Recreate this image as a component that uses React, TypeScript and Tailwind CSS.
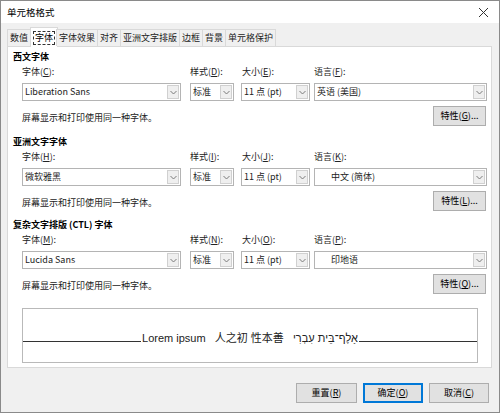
import React from 'react';

const FONT = '"Noto Sans CJK SC", "Noto Sans", sans-serif';

function U({ k }: { k: string }) {
  return <span className="underline underline-offset-1">{k}</span>;
}

function Label({ text, k, className }: { text: string; k: string; className: string }) {
  return (
    <div className={`${className} leading-[14px]`}>
      {text}(<U k={k} />):
    </div>
  );
}

function Chevron() {
  return (
    <svg width="7" height="5" viewBox="0 0 7 5" fill="none">
      <polyline points="0.5,1 3.5,4 6.5,1" stroke="#7a7a7a" strokeWidth="1" />
    </svg>
  );
}

function Combo({ className, text, indent }: { className: string; text: string; indent?: boolean }) {
  return (
    <div className={`${className} h-[18px] flex items-stretch bg-white border border-[#b4b4b4]`}>
      <div className={`flex-1 flex items-center overflow-hidden whitespace-nowrap ${indent ? 'pl-[16px]' : 'pl-[2px]'}`}>
        {text}
      </div>
      <div className="w-[12px] m-[1px] flex items-center justify-center bg-[#efefef] border border-[#d0d0d0]">
        <Chevron />
      </div>
    </div>
  );
}

function Btn({ label, k, className, dots }: { label: string; k: string; className?: string; dots?: boolean }) {
  return (
    <div
      className={`h-[20px] flex items-center justify-center bg-[#e1e1e1] border border-[#adadad] ${className ?? ''}`}
    >
      {label}(<U k={k} />){dots ? '...' : ''}
    </div>
  );
}

type Sec = {
  title: string;
  keys: [string, string, string, string, string];
  font: string;
  lang: string;
  indent: boolean;
};

const sections: Sec[] = [
  { title: '西文字体', keys: ['C', 'D', 'E', 'F', 'G'], font: 'Liberation Sans', lang: '英语 (美国)', indent: false },
  { title: '亚洲文字字体', keys: ['H', 'I', 'J', 'K', 'L'], font: '微软雅黑', lang: '中文 (简体)', indent: true },
  { title: '复杂文字排版 (CTL) 字体', keys: ['M', 'N', 'O', 'P', 'Q'], font: 'Lucida Sans', lang: '印地语', indent: true },
];

const tabs = ['数值', '字体', '字体效果', '对齐', '亚洲文字排版', '边框', '背景', '单元格保护'];

function Section({ s, gap }: { s: Sec; gap: string }) {
  return (
    <div className={gap}>
      <div className="h-[16px] leading-[16px] font-bold text-black">{s.title}</div>
      <div className="pl-[9px]">
        <div className="flex h-[14px] text-[#222]">
          <Label text="字体" k={s.keys[0]} className="w-[159px]" />
          <Label text="样式" k={s.keys[1]} className="ml-[9px] w-[44px]" />
          <Label text="大小" k={s.keys[2]} className="ml-[8px] w-[68px]" />
          <Label text="语言" k={s.keys[3]} className="ml-[4px] w-[173px]" />
        </div>
        <div className="flex mt-[4px] text-[#222]">
          <Combo className="w-[159px]" text={s.font} />
          <Combo className="ml-[9px] w-[44px]" text="标准" />
          <Combo className="ml-[7px] w-[69px]" text="11 点 (pt)" />
          <Combo className="ml-[4px] w-[173px]" text={s.lang} indent={s.indent} />
        </div>
        <div className="flex items-center justify-between mt-[5px] h-[20px] w-[465px]">
          <div className="pt-[3px] text-[#222]">屏幕显示和打印使用同一种字体。</div>
          <Btn label="特性" k={s.keys[4]} dots className="w-[53px] mr-[1px]" />
        </div>
      </div>
    </div>
  );
}

export default function App() {
  return (
    <div
      className="w-[500px] h-[413px] bg-[#f0f0f0] border border-[#8a8a8a] flex flex-col text-[9px] text-black"
      style={{ fontFamily: FONT }}
    >
      {/* title bar */}
      <div className="h-[22px] bg-white flex items-center justify-between pl-[6px] pr-[6px]">
        <span className="text-[9.5px] text-black">单元格格式</span>
        <svg width="11" height="11" viewBox="0 0 11 11" className="mr-[4px]">
          <path d="M1 1L10 10M10 1L1 10" stroke="#333" strokeWidth="1" />
        </svg>
      </div>

      {/* tabs */}
      <div className="h-[23px] flex items-end pl-[6px] relative z-10">
        {tabs.map((t, i) =>
          i === 1 ? (
            <div
              key={t}
              className="h-[20px] -mb-[1px] -mx-[1px] px-[2px] bg-white border border-b-0 border-[#d9d9d9] flex items-center"
            >
              <span className="border border-dashed border-[#333] px-[1px] leading-[12px]">{t}</span>
            </div>
          ) : (
            <div
              key={t}
              className="h-[17px] px-[2px] bg-[#f0f0f0] border border-[#d9d9d9] border-b-0 -ml-[1px] first:ml-0 flex items-center text-[#222]"
            >
              {t}
            </div>
          )
        )}
      </div>

      {/* panel */}
      <div className="ml-[6px] mr-[7px] h-[322px] bg-white border border-[#d9d9d9] pl-[5px] pt-[2px]">
        <Section s={sections[0]} gap="" />
        <Section s={sections[1]} gap="mt-[8px]" />
        <Section s={sections[2]} gap="mt-[6px]" />

        {/* preview */}
        <div className="ml-[9px] mt-[14px] w-[456px] h-[55px] border border-[#b9b9b9] flex items-center">
          <div className="flex w-full items-end mt-[4px]">
            <div className="flex-1 border-b border-[#333] mb-[3px]" />
            <div
              className="text-[11px] leading-[14px] text-[#222] whitespace-nowrap px-[1px]"
              style={{ fontFamily: '"Liberation Sans", "Noto Sans CJK SC", "DejaVu Sans", sans-serif' }}
            >
              Lorem ipsum&nbsp;&nbsp; 人之初 性本善&nbsp;&nbsp; <span dir="rtl">אָלֶף־בֵּית עִבְרִי</span>
            </div>
            <div className="flex-1 border-b border-[#333] mb-[3px]" />
          </div>
        </div>
      </div>

      {/* footer */}
      <div className="flex justify-end gap-[6px] pt-[15px] pr-[10px]">
        <Btn label="重置" k="R" className="w-[61px]" />
        <div className="w-[60px] h-[20px] flex items-center justify-center bg-[#e1e1e1] border-2 border-[#0078d7]">
          确定(<U k="O" />)
        </div>
        <Btn label="取消" k="C" className="w-[60px]" />
      </div>
    </div>
  );
}
